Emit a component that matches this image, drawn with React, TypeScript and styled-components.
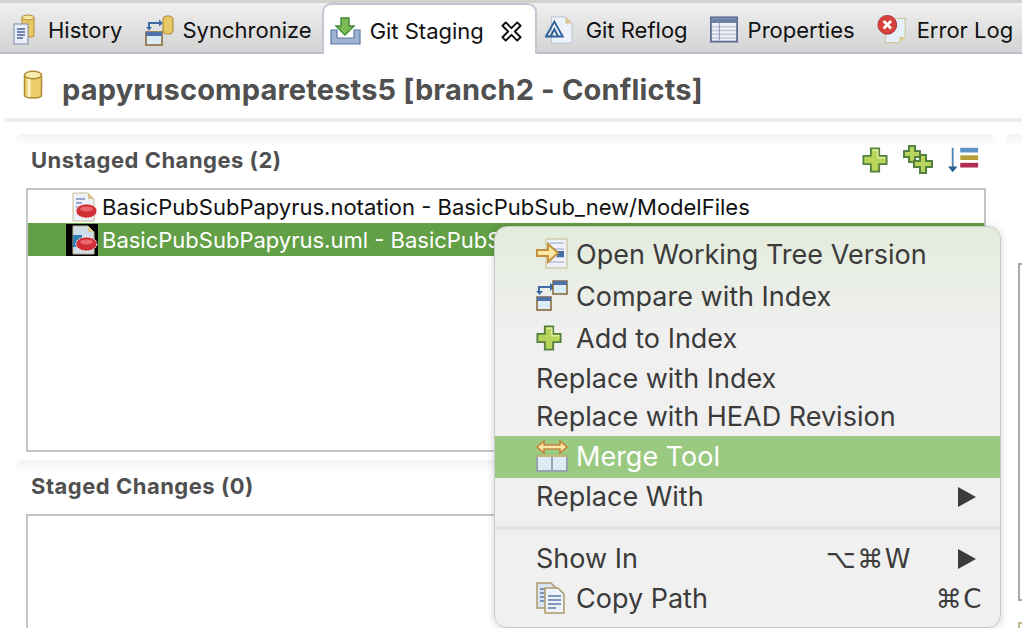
import { ReactNode } from 'react';
import styled, { createGlobalStyle } from 'styled-components'

const GlobalStyle = createGlobalStyle`
  html, body {
    margin: 0;
    padding: 0;
    background: #fff;
    overflow: hidden;
  }
  * { box-sizing: border-box; }
`;

const HistoryIcon = () => (
  <svg width="22" height="31" viewBox="0 0 22 31">
    <path d="M9 3h12v18a2 2 0 0 1-2 2H9z" fill="#e8c964" stroke="#b08a35" />
    <ellipse cx="15" cy="3.5" rx="6" ry="2.5" fill="#f5e6a0" stroke="#b08a35" />
    <rect x="1" y="10" width="14" height="20" fill="#e9eef8" stroke="#7a88ab" />
    <path d="M4 15h8M4 18h8M4 21h8M4 24h6" stroke="#47609a" strokeWidth="1.4" />
  </svg>
);

const SyncIcon = () => (
  <svg width="30" height="32" viewBox="0 0 30 32">
    <path d="M5 15v-6h10" fill="none" stroke="#3f6aa8" strokeWidth="2" />
    <path d="M15 5.500l4 3.500-4 3.500zM2 13h6l-3 3.500z" fill="#3f6aa8" />
    <rect x="2" y="18" width="16" height="13" fill="#dcecf7" stroke="#8a6d3b" strokeWidth="1.6" />
    <rect x="2" y="18" width="16" height="4" fill="#4f73a8" />
    <rect x="19" y="2" width="10" height="18" rx="4" fill="#e8c964" stroke="#b08a35" strokeWidth="1.2" />
  </svg>
);

const StagingIcon = () => (
  <svg width="32" height="30" viewBox="0 0 32 30">
    <path d="M2 14v14h29V14h-6v8H8v-8z" fill="#9fb2d2" stroke="#5c78a8" strokeWidth="1.2" />
    <path d="M12 2h8v8h5l-9 9-9-9h5z" fill="#7dbb55" stroke="#3f8a35" strokeWidth="1.4" />
  </svg>
);

const CloseIcon = () => (
  <svg width="21" height="21" viewBox="0 0 22 22">
    <path d="M5 1.500l6 6 6-6 3.500 3.500-6 6 6 6-3.500 3.500-6-6-6 6L1.500 17l6-6-6-6z" fill="#fff" stroke="#111" strokeWidth="2" strokeLinejoin="round" />
  </svg>
);

const ReflogIcon = () => (
  <svg width="28" height="30" viewBox="0 0 30 32">
    <path d="M7 2h15l7 7v21H7z" fill="#eef3fb" stroke="#b8c0cf" />
    <path d="M22 2v7h7z" fill="#d8c48a" />
    <path d="M1 23L10 7l9 16z" fill="none" stroke="#2c5f96" strokeWidth="2" />
    <path d="M6 23l4-8 4 8" fill="none" stroke="#2c5f96" strokeWidth="2" />
  </svg>
);

const PropertiesIcon = () => (
  <svg width="28" height="27" viewBox="0 0 30 28">
    <rect x="1" y="1" width="28" height="26" fill="#eef0f6" stroke="#5c6f96" strokeWidth="2" />
    <rect x="2" y="2" width="26" height="5" fill="#6c7fa6" />
    <path d="M2 11h26M2 15h26M2 19h26M2 23h26" stroke="#c0c8da" strokeWidth="1.600" />
    <path d="M10 7v19" stroke="#8494b4" />
  </svg>
);

const ErrorIcon = () => (
  <svg width="30" height="31" viewBox="0 0 32 32">
    <path d="M9 4h21v20l-6 6H9z" fill="#e6f0f8" stroke="#cdbd8c" />
    <path d="M24 30v-6h6z" fill="#e0c890" />
    <circle cx="11" cy="11" r="10" fill="#d8403c" stroke="#a53030" />
    <path d="M7 7l8 8M15 7l-8 8" stroke="#fff" strokeWidth="3" />
  </svg>
);

const CylinderIcon = () => (
  <svg width="20" height="30" viewBox="0 0 20 30">
    <path d="M1.500 5v20c0 4 17 4 17 0V5z" fill="#eccf6c" stroke="#b08a35" strokeWidth="1.500" />
    <ellipse cx="10" cy="5" rx="8.500" ry="3.800" fill="#f9eeb0" stroke="#b08a35" strokeWidth="1.500" />
    <path d="M6 9v18" stroke="#fbf3c6" strokeWidth="3" />
  </svg>
);

const PlusIcon = () => (
  <svg width="26" height="28" viewBox="0 0 28 28">
    <path d="M9.500 1.500h9v8h8v9h-8v8h-9v-8h-8v-9h8z" fill="#b9d45a" stroke="#54803f" strokeWidth="2" />
    <path d="M11 3.500h6v8h8" fill="none" stroke="#e3ee9e" strokeWidth="1.500" />
  </svg>
);

const PlusAllIcon = () => (
  <svg width="32" height="30" viewBox="0 0 32 30">
    <path d="M7 1h6v5h5v6h-5v5H7v-5H2V6h5z" fill="#b9d45a" stroke="#54803f" strokeWidth="2" />
    <path d="M18 10h6v6h6v6h-6v6h-6v-6h-6v-6h6z" fill="#b9d45a" stroke="#54803f" strokeWidth="2" />
  </svg>
);

const SortIcon = () => (
  <svg width="32" height="28" viewBox="0 0 34 28">
    <path d="M5 1v21" stroke="#4f86b8" strokeWidth="2" />
    <path d="M0 21h10l-5 6z" fill="#2f5f8e" />
    <rect x="13" y="1" width="19" height="5" fill="#5b94c4" />
    <rect x="13" y="9" width="19" height="5" fill="#b59f38" />
    <rect x="13" y="17" width="19" height="5" fill="#b22c54" />
  </svg>
);

const ConflictFileIcon = ({ selected }: { selected?: boolean }) => (
  <svg width={selected ? 32 : 26} height="32" viewBox={selected ? '-6 0 32 32' : '0 0 26 32'}>
    {selected && <rect x="-6" y="0" width="32" height="32" fill="#000" />}
    <path d="M1 2h15l6 6v22H1z" fill={selected ? '#cfdcea' : '#eef3fb'} stroke="#c6b88e" />
    <path d="M16 2v6h6z" fill="#dcc58a" />
    {selected
      ? <path d="M1 11h9v12H1z" fill="#2f7fb5" />
      : <path d="M4 8h9M4 12h6M4 16h3" stroke="#7a90b8" strokeWidth="1.500" />}
    <ellipse cx="14.500" cy="20" rx="10.500" ry="7" fill="#cf2f35" stroke="#fff" strokeDasharray="2 1" />
    <ellipse cx="14.500" cy="18" rx="6.500" ry="2.500" fill="#e8686c" />
  </svg>
);

const OpenIcon = () => (
  <svg width="32" height="32" viewBox="0 0 32 32">
    <rect x="10" y="1" width="21" height="29" fill="#eef1f8" stroke="#c4b98e" />
    <path d="M13 5h15M17 11h11M20 15h8M20 19h8M13 24h15" stroke="#b4bfd6" strokeWidth="1.500" />
    <rect x="21" y="13" width="7" height="6" fill="#4470a8" />
    <path d="M1 12h11V6l10 9-10 9v-6H1z" fill="#fbe8a8" stroke="#c4913c" strokeWidth="2" />
  </svg>
);

const CompareIcon = () => (
  <svg width="32" height="32" viewBox="0 0 32 32">
    <path d="M3 12V7h11" fill="none" stroke="#3f6aa8" strokeWidth="2" />
    <path d="M14 3l5 4-5 4zM0 11h7l-3.500 4z" fill="#3f6aa8" />
    <rect x="1" y="17" width="14" height="13" fill="#dcecf7" stroke="#8a6d3b" strokeWidth="1.600" />
    <rect x="1" y="17" width="14" height="4" fill="#4f73a8" />
    <rect x="17" y="1" width="14" height="13" fill="#dcecf7" stroke="#8a6d3b" strokeWidth="1.600" />
    <rect x="17" y="1" width="14" height="4" fill="#4f73a8" />
  </svg>
);

const MergeIcon = () => (
  <svg width="32" height="32" viewBox="0 0 32 32">
    <path d="M1 7l7-6v4h16V1l7 6-7 6V9H8v4z" fill="#fbe8a8" stroke="#c4853c" strokeWidth="1.600" />
    <rect x="1" y="16" width="30" height="15" fill="#dcecf7" stroke="#9aa3a8" strokeWidth="2" />
    <path d="M16 16v15" stroke="#9aa3a8" strokeWidth="2" />
    <rect x="1" y="15" width="30" height="2" fill="#c8b47a" />
  </svg>
);

const CopyIcon = () => (
  <svg width="30" height="32" viewBox="0 0 30 32">
    <path d="M1 1h14l5 5v20H1z" fill="#dce4f2" stroke="#ad9a6b" strokeWidth="1.500" />
    <path d="M4 7h8M4 11h8M4 15h8M4 19h8" stroke="#5a7aa8" strokeWidth="1.500" />
    <path d="M9 6h13l6 6v19H9z" fill="#eef3fb" stroke="#ad9a6b" strokeWidth="1.500" />
    <path d="M12 14h13M12 18h13M12 22h13M12 26h8" stroke="#5a7aa8" strokeWidth="1.600" />
  </svg>
);

interface TabData {
  label: string;
  icon: ReactNode;
  gap: number;
  active?: boolean;
}

const tabs: TabData[] = [
  { label: 'History', icon: <HistoryIcon />, gap: 13 },
  { label: 'Synchronize', icon: <SyncIcon />, gap: 8 },
  { label: 'Git Staging', icon: <StagingIcon />, gap: 9, active: true },
  { label: 'Git Reflog', icon: <ReflogIcon />, gap: 13 },
  { label: 'Properties', icon: <PropertiesIcon />, gap: 10 },
  { label: 'Error Log', icon: <ErrorIcon />, gap: 10 },
];

export default function App() {
  return (
    <Page>
      <GlobalStyle />
      <TabBar>
        {tabs.map(tab => (
          <Tab key={tab.label} $active={tab.active} $gap={tab.gap}>
            {tab.icon}
            <span>{tab.label}</span>
            {tab.active && <CloseSlot><CloseIcon /></CloseSlot>}
          </Tab>
        ))}
      </TabBar>

      <RepoHeader>
        <CylinderIcon />
        <RepoTitle>papyruscomparetests5 [branch2 - Conflicts]</RepoTitle>
      </RepoHeader>
      <HeaderRule />

      <Workspace>
        <StagingPane>
          <Section>
            <SectionHead>
              <SectionTitle>Unstaged Changes (2)</SectionTitle>
              <Toolbar>
                <PlusIcon />
                <PlusAllIcon />
                <SortIcon />
              </Toolbar>
            </SectionHead>
            <FileList>
              <FileRow>
                <ConflictFileIcon />
                <span>BasicPubSubPapyrus.notation - BasicPubSub_new/ModelFiles</span>
              </FileRow>
              <FileRow $selected>
                <ConflictFileIcon selected />
                <span>BasicPubSubPapyrus.uml - BasicPubSub_new/ModelFiles</span>
              </FileRow>
            </FileList>
          </Section>
          <Section>
            <SectionHead>
              <SectionTitle>Staged Changes (0)</SectionTitle>
            </SectionHead>
            <FileList $open />
          </Section>
        </StagingPane>
        <CommitPane>
          <CommitLabel>Commit Message</CommitLabel>
          <CommitBox />
          <AuthorMark />
        </CommitPane>
      </Workspace>

      <Menu>
        <MenuItem $height={42}><ItemIcon><OpenIcon /></ItemIcon><span>Open Working Tree Version</span></MenuItem>
        <MenuItem $height={42}><ItemIcon><CompareIcon /></ItemIcon><span>Compare with Index</span></MenuItem>
        <MenuItem $height={42}><ItemIcon><PlusIcon /></ItemIcon><span>Add to Index</span></MenuItem>
        <MenuItem $height={38}>Replace with Index</MenuItem>
        <MenuItem $height={38}>Replace with HEAD Revision</MenuItem>
        <MenuItem $height={42} $active><ItemIcon><MergeIcon /></ItemIcon><span>Merge Tool</span></MenuItem>
        <MenuItem $height={38}>Replace With<Arrow /></MenuItem>
        <MenuSeparator />
        <MenuItem $height={38}>
          Show In
          <Shortcut $right={88}>⌥⌘W</Shortcut>
          <Arrow />
        </MenuItem>
        <MenuItem $height={42}>
          <ItemIcon><CopyIcon /></ItemIcon>
          <span>Copy Path</span>
          <Shortcut $right={17}>⌘C</Shortcut>
        </MenuItem>
      </Menu>
    </Page>
  )
}

const Page = styled.div`
  position: relative;
  width: 1022px;
  height: 628px;
  overflow: hidden;
  background: #fff;
  font-family: Inter, "Liberation Sans", sans-serif;
  display: flex;
  flex-direction: column;
`;

const TabBar = styled.div`
  height: 54px;
  flex: none;
  display: flex;
  align-items: stretch;
  gap: 22px;
  padding: 4px 0 0 13px;
  border-top: 3px solid #d2d2cc;
  border-bottom: 2px solid #babdcc;
  background: linear-gradient(#f0f0f0, #d3d3d3);
`;

const Tab = styled.div<{ $active?: boolean; $gap: number }>`
  display: flex;
  align-items: center;
  gap: ${({ $gap }) => $gap}px;
  font-size: 22px;
  color: #111;
  white-space: nowrap;

  ${({ $active }) => $active && `
    background: #fff;
    margin: -4px -14px -2px -12px;
    padding: 3px 0 0 5px;
    width: 215px;
    border: 2px solid #c3c7d4;
    border-bottom: none;
    border-radius: 9px 9px 0 0;
  `}
`;

const CloseSlot = styled.span`
  margin-left: 8px;
  display: flex;
`;

const RepoHeader = styled.div`
  height: 64px;
  flex: none;
  display: flex;
  align-items: center;
  gap: 19px;
  padding: 0 0 2px 23px;
`;

const RepoTitle = styled.div`
  padding-top: 9px;
  font-size: 29px;
  font-weight: 700;
  letter-spacing: 0.17px;
  color: #505050;
  white-space: nowrap;
`;

const HeaderRule = styled.div`
  height: 4px;
  flex: none;
  margin-left: 5px;
  background: #ececec;
`;

const Workspace = styled.div`
  flex: 1;
  min-height: 0;
  display: flex;
  padding-top: 12px;
`;

const StagingPane = styled.div`
  width: 980px;
  flex: none;
  margin-left: 16px;
  display: flex;
  flex-direction: column;
  gap: 8px;
`;

const Section = styled.section`
  padding-left: 10px;
  border-radius: 6px 6px 0 0;
  background: linear-gradient(#f3f3f3, #fff 12px);
`;

const SectionHead = styled.div`
  height: 54px;
  display: flex;
  align-items: center;
  justify-content: space-between;
  padding: 0 16px 2px 5px;
`;

const SectionTitle = styled.div`
  font-size: 22px;
  font-weight: 700;
  letter-spacing: 0.5px;
  color: #505050;
`;

const Toolbar = styled.div`
  display: flex;
  align-items: center;
  gap: 14px;
`;

const FileList = styled.div<{ $open?: boolean }>`
  width: 960px;
  height: ${({ $open }) => ($open ? '114px' : '264px')};
  border: 2px solid #c4c4c4;
  border-bottom: ${({ $open }) => ($open ? 'none' : '2px solid #c4c4c4')};
`;

const FileRow = styled.div<{ $selected?: boolean }>`
  height: 33px;
  display: flex;
  align-items: center;
  gap: 4px;
  padding-left: ${({ $selected }) => ($selected ? '38px' : '44px')};
  font-size: 22px;
  white-space: nowrap;
  overflow: hidden;
  color: ${({ $selected }) => ($selected ? '#fff' : '#111')};
  background: ${({ $selected }) => ($selected ? '#629f47' : 'transparent')};
`;

const CommitPane = styled.div`
  flex: 1;
  min-width: 0;
  margin-left: 10px;
  display: flex;
  flex-direction: column;
  border-radius: 6px 0 0 0;
  background: linear-gradient(#f3f3f3, #fff 12px);
`;

const CommitLabel = styled.div`
  height: 54px;
  padding-left: 15px;
  display: flex;
  align-items: center;
  font-size: 22px;
  font-weight: 700;
  color: #505050;
  white-space: nowrap;
`;

const CommitBox = styled.div`
  height: 338px;
  flex: none;
  margin: 75px 0 0 12px;
  border: 2px solid #aaa;
  border-right: none;
  background: #fff;
`;

const AuthorMark = styled.div`
  height: 6px;
  flex: none;
  margin: 21px 0 0 12px;
  border-top: 2px solid #c4b98e;
  border-left: 2px solid #c4b98e;
`;

const Menu = styled.div`
  position: absolute;
  left: 494px;
  top: 226px;
  width: 507px;
  height: 402px;
  padding-top: 7px;
  border: 1px solid #c6c9c4;
  border-radius: 13px;
  background: linear-gradient(#e3ecdc, #f0f0f0 110px);
  box-shadow: 0 1px 8px rgba(0, 0, 0, 0.18);
  font-size: 27px;
  color: #3b3b3b;
`;

const MenuItem = styled.div<{ $height: number; $active?: boolean }>`
  position: relative;
  height: ${({ $height }) => $height}px;
  display: flex;
  align-items: center;
  padding: 0 0 2px 41px;
  white-space: nowrap;
  color: ${({ $active }) => ($active ? '#fff' : '#3b3b3b')};
  background: ${({ $active }) => ($active ? '#9ac981' : 'transparent')};
`;

const ItemIcon = styled.span`
  width: 40px;
  flex: none;
  display: flex;
  align-items: center;
`;

const Arrow = styled.span`
  position: absolute;
  right: 24px;
  top: 50%;
  margin-top: -10px;
  border-left: 18px solid #3b3b3b;
  border-top: 10px solid transparent;
  border-bottom: 10px solid transparent;
`;

const Shortcut = styled.span<{ $right: number }>`
  position: absolute;
  right: ${({ $right }) => $right}px;
  top: 50%;
  transform: translateY(-50%);
  font-family: "DejaVu Sans", sans-serif;
  font-size: 26px;
  letter-spacing: 1.5px;
`;

const MenuSeparator = styled.div`
  height: 4px;
  margin: 10px 0;
  background: #e2e2e2;
`;
